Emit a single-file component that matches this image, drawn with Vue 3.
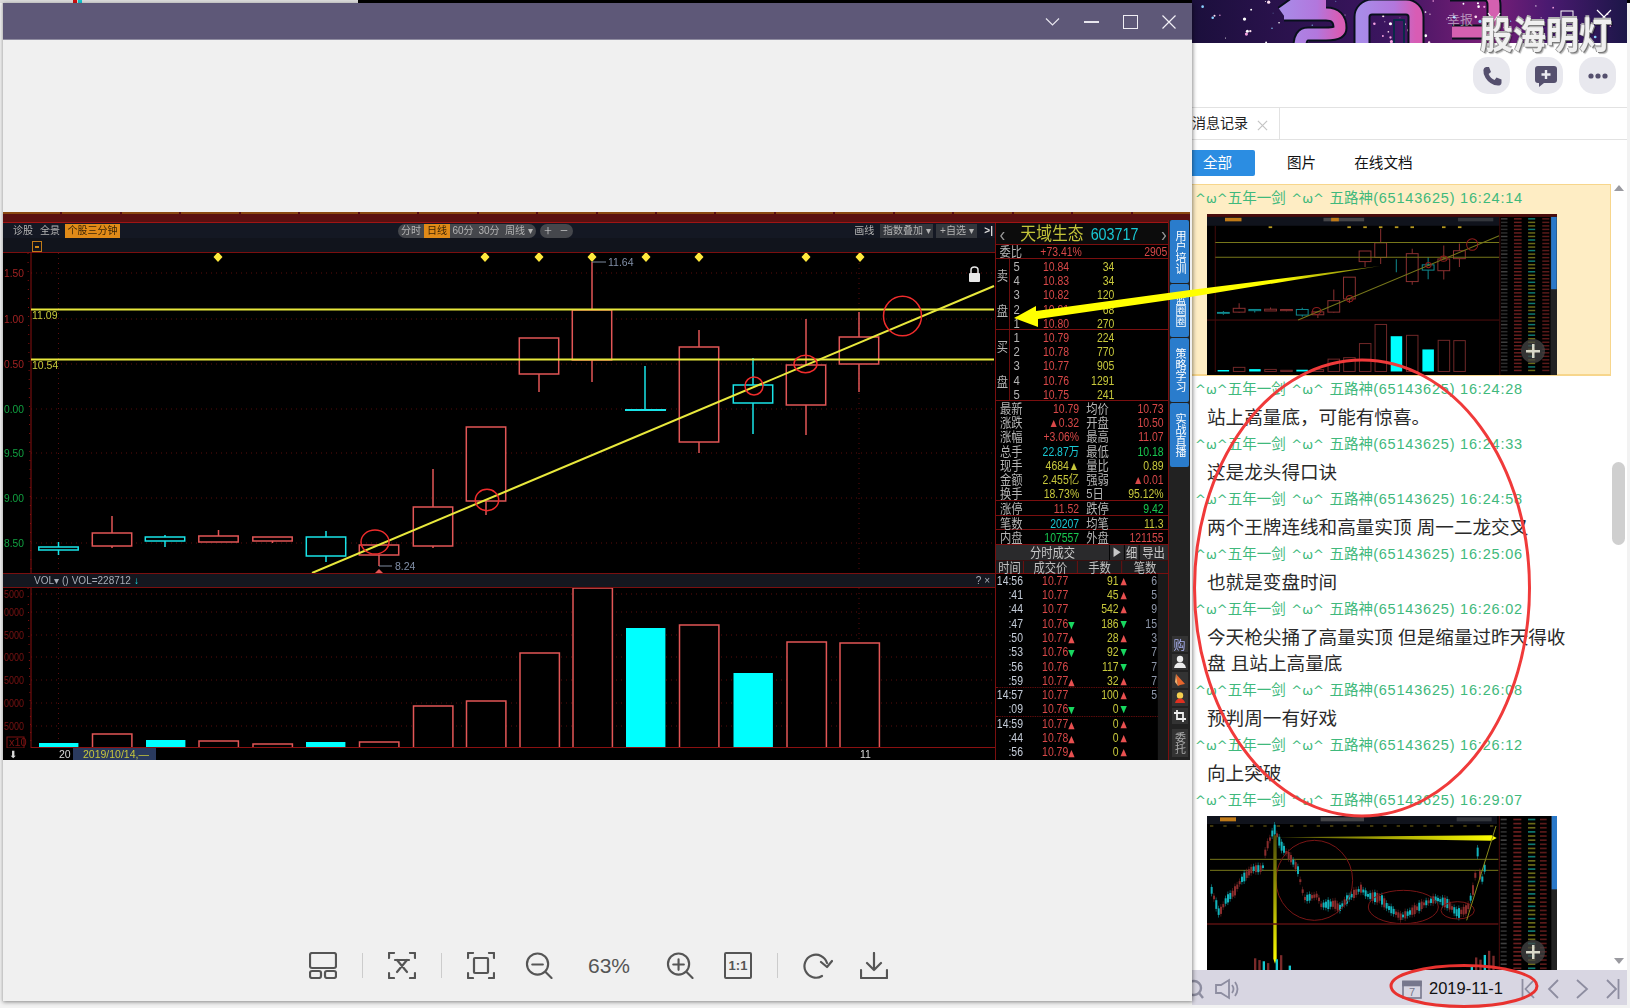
<template>
  <div class="desktop">
    <div class="top-strip">
      <span class="strip-text"><i class="bit red"></i><i class="bit cyan"></i></span>
    </div>

    <!-- chat window behind the viewer -->
    <section class="chat">
      <div class="banner">
        <svg class="banner-art" viewBox="1192 0 435 43" preserveAspectRatio="none">
          <defs>
            <linearGradient id="sky" x1="0" x2="1" y1="0" y2="0">
              <stop offset="0" stop-color="#1b0f3c" />
              <stop offset="0.45" stop-color="#3c1560" />
              <stop offset="0.68" stop-color="#7a1e78" />
              <stop offset="0.82" stop-color="#4a1a70" />
              <stop offset="1" stop-color="#1c1648" />
            </linearGradient>
            <linearGradient id="band" x1="0" x2="1" y1="0" y2="0">
              <stop offset="0" stop-color="#a98be8" />
              <stop offset="0.6" stop-color="#b277dd" />
              <stop offset="1" stop-color="#d85cb4" />
            </linearGradient>
          </defs>
          <rect x="1192" y="0" width="435" height="43" fill="url(#sky)" />
          <circle v-for="s in stars" :key="s.id" :cx="s.x" :cy="s.y" :r="s.r" :fill="s.c" />
          <g fill="none" stroke-linejoin="round">
            <path d="M1282 13 L1296 3 H1326 M1284 14 H1326 Q1340 14 1340 28 Q1340 34 1326 34 H1308 Q1300 34 1300 46" stroke="#08101c" stroke-width="15" />
            <path d="M1282 13 L1296 3 H1326 M1284 14 H1326 Q1340 14 1340 28 Q1340 34 1326 34 H1308 Q1300 34 1300 46" stroke="url(#band)" stroke-width="11" />
            <rect x="1362" y="7" width="54" height="50" rx="10" stroke="#08101c" stroke-width="17" />
            <rect x="1362" y="7" width="54" height="50" rx="10" stroke="url(#band)" stroke-width="13" />
            <rect x="1394" y="20" width="10" height="30" stroke="#0a2a48" stroke-width="2" />
            <path d="M1450 -6 H1484 Q1494 -6 1494 6 V22 Q1494 32 1484 32 H1452" stroke="#08101c" stroke-width="15" />
            <path d="M1450 -6 H1484 Q1494 -6 1494 6 V22 Q1494 32 1484 32 H1452" stroke="#d460b0" stroke-width="11" />
          </g>
          <path d="M1488 13 L1494 21 L1500 13" fill="none" stroke="#fff" stroke-width="1.2" />
          <rect x="1561" y="11" width="12" height="12" fill="none" stroke="#fff" stroke-width="1" />
          <path d="M1597 10 L1611 24 M1611 10 L1597 24" stroke="#fff" stroke-width="1.2" />
        </svg>
        <span class="banner-note">幸报</span>
      </div>
      <div class="watermark">股海明灯</div>

      <div class="actions">
        <button class="act">
          <svg viewBox="0 0 24 24" width="24" height="24"><path d="M6 3 L9 3 L11 8 L8.6 10 Q10.5 14.4 14.6 16 L16.5 13.6 L21.5 15.6 L21.5 19 Q21 21.6 18 21.6 Q10 21 5.6 14 Q3 9.5 3.4 6 Q3.8 3.4 6 3Z" fill="#55506e" /></svg>
        </button>
        <button class="act">
          <svg viewBox="0 0 24 24" width="24" height="24"><path d="M2 5 Q2 2 5 2 H21 Q24 2 24 5 V16 Q24 19 21 19 H11 L6 23 V19 H5 Q2 19 2 16Z" fill="#55506e" /><path d="M13 6 V15 M8.5 10.5 H17.5" stroke="#ecebf1" stroke-width="2.4" /></svg>
        </button>
        <button class="act">
          <svg viewBox="0 0 24 24" width="24" height="24"><circle cx="5" cy="12" r="2.6" fill="#55506e" /><circle cx="12" cy="12" r="2.6" fill="#55506e" /><circle cx="19" cy="12" r="2.6" fill="#55506e" /></svg>
        </button>
      </div>

      <div class="tabs">
        <div class="tab">
          <span class="tab-name">消息记录</span>
          <svg class="tab-x" viewBox="0 0 12 12" width="11" height="11"><path d="M1 1 L11 11 M11 1 L1 11" stroke="#c4c4c4" stroke-width="1.3" /></svg>
        </div>
      </div>

      <div class="filters">
        <span class="filter on">全部</span>
        <span class="filter pic">图片</span>
        <span class="filter doc">在线文档</span>
      </div>

      <div class="log">
        <div class="entry picked">
          <div class="who"><span class="nick"><span class="emo">^ω^</span>五年一剑 <span class="emo">^ω^</span> 五路神</span><span class="uid">(65143625) 16:24:14</span></div>
          <svg class="shot" viewBox="3 212 1187 548" preserveAspectRatio="none">
            <rect x="3" y="212" width="1187" height="548" fill="#000" />
            <rect x="3" y="212" width="1187" height="10" fill="#4a0c0c" />
            <rect x="3" y="222" width="992" height="30" fill="#10131c" />
            <rect x="64" y="225" width="56" height="12" fill="#c07a18" />
            <rect x="398" y="225" width="138" height="12" fill="#454548" />
            <rect x="424" y="225" width="26" height="12" fill="#c07a18" />
            <rect x="854" y="225" width="120" height="12" fill="#33363c" />
            <line x1="3" x2="995" y1="573" y2="573" stroke="#5a1010" stroke-width="3" />
            <line x1="31" x2="31" y1="253" y2="750" stroke="#4a0c0c" stroke-width="3" />
            <rect v-for="d in diamonds" :key="d" :x="d - 6" y="254" width="12" height="6" fill="#b89a20" />
            <g v-for="c in candles" :key="c.x" fill="none" :stroke="c.up ? '#8a3030' : '#0f8a90'" stroke-width="3.4">
              <line :x1="c.x" :x2="c.x" :y1="c.hi" :y2="c.lo" />
              <rect :x="c.x - 20" :y="c.top" width="40" :height="c.bot - c.top" fill="#000" />
            </g>
            <line x1="31" x2="994" y1="309" y2="309" stroke="#77771a" stroke-width="3.4" />
            <line x1="31" x2="994" y1="359" y2="359" stroke="#77771a" stroke-width="3.4" />
            <line x1="312" x2="994" y1="573" y2="286" stroke="#77771a" stroke-width="3.4" />
            <ellipse v-for="e in rings" :key="e.cx" :cx="e.cx" :cy="e.cy" :rx="e.rx" :ry="e.ry" fill="none" stroke="#8e1c1c" stroke-width="3.4" />
            <g v-for="b in volumes" :key="b.x">
              <rect :x="b.x" :y="b.top" width="39" :height="748 - b.top" :fill="b.up ? 'none' : '#00ffff'" :stroke="b.up ? '#702828' : 'none'" stroke-width="3.4" />
            </g>
            <g v-for="n in noise" :key="n.id">
              <rect x="1000" :y="n.y" width="22" height="5" :fill="n.a" />
              <rect x="1044" :y="n.y" width="26" height="5" fill="#6a1e1e" />
              <rect x="1092" :y="n.y" width="24" height="5" :fill="n.b" />
              <rect x="1140" :y="n.y" width="24" height="5" fill="#5a1a1a" />
            </g>
            <line x1="996" x2="996" y1="223" y2="760" stroke="#4a0c0c" stroke-width="3" />
            <rect x="1168" y="222" width="22" height="538" fill="#222" />
            <rect x="1170" y="222" width="19" height="246" fill="#2a78c8" />
          </svg>
          <span class="plus"></span>
        </div>

        <div v-for="m in messages" :key="m.time" class="entry">
          <div class="who"><span class="nick"><span class="emo">^ω^</span>五年一剑 <span class="emo">^ω^</span> 五路神</span><span class="uid">(65143625) {{ m.time }}</span></div>
          <p class="say">{{ m.text }}</p>
        </div>

        <div class="entry">
          <div class="who"><span class="nick"><span class="emo">^ω^</span>五年一剑 <span class="emo">^ω^</span> 五路神</span><span class="uid">(65143625) 16:29:07</span></div>
          <svg class="shot" viewBox="51 42 1050 483" preserveAspectRatio="none">
            <defs>
              <linearGradient id="hot" x1="0" x2="1" y1="0" y2="0">
                <stop offset="0" stop-color="#4a4a08" />
                <stop offset="1" stop-color="#ffff00" />
              </linearGradient>
              <linearGradient id="drop" x1="0" x2="0" y1="0" y2="1">
                <stop offset="0" stop-color="#4a4a08" />
                <stop offset="1" stop-color="#ffff00" />
              </linearGradient>
            </defs>
            <rect x="51" y="42" width="1050" height="483" fill="#000" />
            <rect x="51" y="42" width="870" height="24" fill="#10131c" />
            <rect x="90" y="46" width="48" height="12" fill="#c07a18" />
            <rect x="392" y="46" width="130" height="12" fill="#454548" />
            <rect x="800" y="46" width="105" height="12" fill="#33363c" />
            <line x1="60" x2="925" y1="72" y2="72" stroke="#7a6a18" stroke-width="3" stroke-dasharray="10 30" />
            <line x1="60" x2="925" y1="172" y2="172" stroke="#77771a" stroke-width="3" />
            <line x1="60" x2="925" y1="205" y2="205" stroke="#77771a" stroke-width="3" />
            <g v-for="b in sticks" :key="b.x">
              <line :x1="b.x + 2.5" :x2="b.x + 2.5" :y1="b.y - 8" :y2="b.y + b.h + 8" :stroke="b.c" stroke-width="1.5" />
              <rect :x="b.x" :y="b.y" width="6" :height="b.h" :fill="b.c" />
            </g>
            <ellipse cx="373" cy="235" rx="115" ry="120" fill="none" stroke="#7a1616" stroke-width="3" />
            <ellipse cx="640" cy="315" rx="105" ry="50" fill="none" stroke="#7a1616" stroke-width="3" />
            <ellipse cx="803" cy="325" rx="50" ry="26" fill="none" stroke="#7a1616" stroke-width="3" />
            <polygon points="255,106 905,100 920,108 905,116" fill="url(#hot)" />
            <polygon points="250,100 260,100 260,470 255,485 250,470" fill="url(#drop)" />
            <line x1="830" y1="355" x2="918" y2="72" stroke="#8a8a1a" stroke-width="3" />
            <line x1="51" x2="925" y1="366" y2="366" stroke="#5a1010" stroke-width="5" />
            <rect v-for="s in spikes" :key="s.x" :x="s.x" :y="s.y" width="7" :height="525 - s.y" :fill="s.c" />
            <g v-for="n in noiseTwo" :key="n.id">
              <rect x="932" :y="n.y" width="18" height="5" :fill="n.a" />
              <rect x="970" :y="n.y" width="24" height="5" fill="#6a1e1e" />
              <rect x="1014" :y="n.y" width="22" height="5" :fill="n.b" />
              <rect x="1050" :y="n.y" width="20" height="5" fill="#5a1a1a" />
            </g>
            <line x1="928" x2="928" y1="42" y2="525" stroke="#4a0c0c" stroke-width="3" />
            <rect x="1084" y="42" width="17" height="483" fill="#222" />
            <rect x="1085" y="42" width="16" height="220" fill="#2a78c8" />
          </svg>
          <span class="plus low"></span>
        </div>
      </div>

      <div class="scroll">
        <i class="arrow up"></i>
        <i class="thumb"></i>
        <i class="arrow down"></i>
      </div>

      <div class="footer">
        <svg class="foot-find" viewBox="0 0 16 22" width="16" height="22"><circle cx="2" cy="10" r="7" fill="none" stroke="#8d8da0" stroke-width="2.4" /><path d="M7 15 L11 20" stroke="#8d8da0" stroke-width="2.4" /></svg>
        <svg class="foot-sound" viewBox="0 0 26 22" width="26" height="22" fill="none" stroke="#8d8da0" stroke-width="1.8">
          <path d="M1 7 H6 L14 2 V20 L6 15 H1Z" />
          <path d="M17 7 Q20 11 17 15 M20 4 Q25 11 20 18" />
        </svg>
        <svg class="foot-cal" viewBox="0 0 20 20" width="20" height="20" fill="none" stroke="#77778c" stroke-width="1.6">
          <rect x="1" y="2.5" width="18" height="16.5" />
          <rect x="1" y="2.5" width="18" height="4" fill="#77778c" />
        </svg>
        <span class="foot-cal-num">7</span>
        <span class="date">2019-11-1</span>
        <svg class="pager first" viewBox="0 0 15 20" width="15" height="20"><path d="M1.5 0 V20 M13 1 L4.5 10 L13 19" /></svg>
        <svg class="pager back" viewBox="0 0 12 20" width="12" height="20"><path d="M11 1 L2 10 L11 19" /></svg>
        <svg class="pager" viewBox="0 0 14 20" width="14" height="20"><path d="M2 1 L12 10 L2 19" /></svg>
        <svg class="pager" viewBox="0 0 15 20" width="15" height="20"><path d="M2 1 L11 10 L2 19 M13.5 0 V20" /></svg>
      </div>
    </section>

    <!-- image viewer on top -->
    <section class="viewer">
      <header class="title-bar">
        <svg viewBox="0 0 14 8" width="15" height="8"><path d="M.5 .5 L7 7 L13.5 .5" fill="none" stroke="#e8e6ee" stroke-width="1.2" /></svg>
        <i class="min"></i>
        <i class="max"></i>
        <svg viewBox="0 0 14 14" width="14" height="14"><path d="M.5 .5 L13.5 13.5 M13.5 .5 L.5 13.5" stroke="#f2f0f6" stroke-width="1.2" /></svg>
      </header>

      <div class="stage">
        <div class="chart">
          <div class="chart-top">
            <i v-for="n in 20" :key="n" class="top-chip"></i>
          </div>
          <div class="chart-row">
            <div class="kline">
              <div class="tools">
                <span class="tool">诊股</span>
                <span class="tool">全景</span>
                <span class="tool hot">个股三分钟</span>
                <div class="pill">
                  <span>分时</span><span class="lit">日线</span><span>60分</span><span>30分</span><span class="wide">周线 ▾</span>
                </div>
                <div class="pill mini"><span>＋</span><span>－</span></div>
                <span class="tool push">画线</span>
                <span class="tool box index">指数叠加 ▾</span>
                <span class="tool box self">+自选 ▾</span>
                <span class="tool end">&gt;|</span>
              </div>
              <div class="subbar"><i class="drop"></i></div>

              <svg class="plot" viewBox="3 253 992 320" width="992" height="320">
                <g stroke="#5a0d0d" stroke-dasharray="1 4">
                  <line v-for="g in priceGrid" :key="g.y" x1="31" x2="995" :y1="g.y" :y2="g.y" />
                  <line x1="58.5" x2="58.5" y1="253" y2="573" />
                  <line x1="859" x2="859" y1="253" y2="573" />
                </g>
                <line x1="31" x2="31" y1="253" y2="573" stroke="#8a1010" />
                <line x1="28" x2="31" y1="253" y2="573" stroke="#8a1010" stroke-dasharray="1 8" />
                <text v-for="g in priceGrid" :key="g.label" class="axis" x="4" :y="g.y + 4" textLength="20" lengthAdjust="spacingAndGlyphs" :fill="g.c">{{ g.label }}</text>
                <polygon v-for="d in diamonds" :key="d" :points="`${d},252 ${d + 4.5},257 ${d},262 ${d - 4.5},257`" fill="#ffe93c" />

                <g v-for="c in candles" :key="c.x" fill="none" :stroke="c.up ? '#e25656' : '#19e4e8'" stroke-width="1.5">
                  <line :x1="c.x" :x2="c.x" :y1="c.hi" :y2="c.lo" />
                  <rect :x="c.x - 19.7" :y="c.top" width="39.4" :height="c.bot - c.top" fill="#000" />
                </g>
                <line x1="625" x2="666" y1="410" y2="410" stroke="#19e4e8" stroke-width="2" />

                <polyline points="379,566 392,566" fill="none" stroke="#7f8ca0" />
                <text class="note" x="395" y="570">8.24</text>
                <polygon points="379,569 383,573 375,573" fill="#e25656" />
                <polyline points="592,262 606,262" fill="none" stroke="#7f8ca0" />
                <text class="note" x="608" y="266">11.64</text>

                <line x1="31" x2="994" y1="309.5" y2="309.5" stroke="#e8e83c" stroke-width="2" />
                <line x1="31" x2="994" y1="359.5" y2="359.5" stroke="#e8e83c" stroke-width="2" />
                <text class="level" x="32" y="319">11.09</text>
                <text class="level" x="32" y="369">10.54</text>
                <line x1="312" y1="573" x2="994" y2="286" stroke="#e8e83c" stroke-width="2" />
                <ellipse v-for="e in rings" :key="e.cx" :cx="e.cx" :cy="e.cy" :rx="e.rx" :ry="e.ry" fill="none" stroke="#f02c2c" stroke-width="1.5" />

                <g fill="#e8e8e8">
                  <rect x="969" y="273" width="11" height="9" rx="1" />
                  <path d="M971 273 V270 Q971 267 974.5 267 Q978 267 978 270 V273" fill="none" stroke="#e8e8e8" stroke-width="1.5" />
                </g>
              </svg>

              <div class="vol-bar">
                <span class="vol-name">VOL▾</span>
                <span>()</span>
                <span>VOL=228712</span>
                <span class="vol-down">↓</span>
                <span class="vol-close">? ×</span>
              </div>

              <svg class="plot" viewBox="3 588 992 160" width="992" height="160">
                <g stroke="#5a0d0d" stroke-dasharray="1 4">
                  <line v-for="v in volGrid" :key="v.y" x1="31" x2="995" :y1="v.y" :y2="v.y" />
                  <line x1="58.5" x2="58.5" y1="588" y2="748" />
                  <line x1="859" x2="859" y1="588" y2="748" />
                </g>
                <line x1="31" x2="31" y1="588" y2="748" stroke="#8a1010" />
                <line x1="28" x2="31" y1="588" y2="748" stroke="#8a1010" stroke-dasharray="1 7" />
                <text v-for="v in volGrid" :key="v.y" class="axis dark" x="4" :y="v.y + 4" textLength="20" lengthAdjust="spacingAndGlyphs">{{ v.label }}</text>
                <rect x="7" y="737" width="17" height="11" fill="none" stroke="#7a1010" />
                <text class="axis dark" x="9" y="746">x10</text>
                <rect v-for="b in volumes" :key="b.x" :x="b.x" :y="b.top" width="39.4" :height="748 - b.top" :fill="b.up ? '#000' : '#00ffff'" :stroke="b.up ? '#e25656' : 'none'" stroke-width="1.5" />
                <line x1="31" x2="995" y1="747.5" y2="747.5" stroke="#8a1010" />
              </svg>

              <div class="date-row">
                <span class="date-arrow">⬇</span>
                <span class="date-year">20</span>
                <span class="date-chip">2019/10/14,—</span>
                <span class="date-month">11</span>
              </div>
            </div>

            <aside class="quote">
              <div class="quote-in">
                <div class="q-title">
                  <span class="nav">‹</span>
                  <span class="q-name">天域生态</span>
                  <span class="q-code">603717</span>
                  <span class="nav next">›</span>
                </div>
                <div class="q-wei">
                  <span class="lab">委比</span><span class="red">+73.41%</span><span class="red right">2905</span>
                </div>
                <div v-for="side in book" :key="side.name" class="book">
                  <div class="book-side"><span>{{ side.name }}</span><span>盘</span></div>
                  <div class="book-rows">
                    <div v-for="r in side.rows" :key="r.n" class="book-row">
                      <span class="lab">{{ r.n }}</span><span class="red">{{ r.p }}</span><span class="yel right">{{ r.v }}</span>
                    </div>
                  </div>
                </div>
                <div class="stats">
                  <div v-for="s in stats" :key="s.a" class="stat">
                    <span class="lab">{{ s.a }}</span>
                    <span class="right" :class="s.ac">{{ s.av }}</span>
                    <span class="lab second">{{ s.b }}</span>
                    <span class="right" :class="s.bc">{{ s.bv }}</span>
                  </div>
                </div>
                <div v-for="s in statsLow" :key="s.a" class="stat ruled">
                  <span class="lab">{{ s.a }}</span>
                  <span class="right" :class="s.ac">{{ s.av }}</span>
                  <span class="lab second">{{ s.b }}</span>
                  <span class="right" :class="s.bc">{{ s.bv }}</span>
                </div>
                <div class="deal-head">
                  <span class="deal-name">分时成交</span>
                  <span class="deal-btn play">▶</span>
                  <span class="deal-btn">细</span>
                  <span class="deal-btn out">导出</span>
                </div>
                <div class="deal-cols">
                  <span class="c1">时间</span><span class="c2">成交价</span><span class="c3">手数</span><span class="c4">笔数</span>
                </div>
                <div class="ticks">
                  <div class="tick-list">
                    <div v-for="(t, i) in ticks" :key="i" class="tick" :class="{ cut: t.cut }">
                      <span class="t-time">{{ t.t }}</span>
                      <span class="t-price">{{ t.p }}<i v-if="t.pa" :class="t.pa">{{ t.pa === 'u' ? '▲' : '▼' }}</i></span>
                      <span class="t-vol">{{ t.v }}</span>
                      <i class="t-mark" :class="t.va">{{ t.va === 'u' ? '▲' : '▼' }}</i>
                      <span class="t-count">{{ t.c }}</span>
                    </div>
                  </div>
                  <i class="tick-scroll"></i>
                </div>
              </div>
            </aside>

            <div class="rail">
              <span v-for="b in rail" :key="b" class="rail-tab">{{ b }}</span>
              <div class="rail-tools">
                <span class="rail-btn buy">购</span>
                <span class="rail-btn">
                  <svg viewBox="0 0 14 14" width="14" height="14"><circle cx="7" cy="4" r="3.2" fill="#eee" /><path d="M1 13 Q2 7.5 7 7.5 Q12 7.5 13 13Z" fill="#eee" /></svg>
                </span>
                <span class="rail-btn">
                  <svg viewBox="0 0 14 14" width="14" height="14"><path d="M3 1 L12 11 L7 12 L5 13 Z" fill="#e8662c" /><path d="M3 1 L5 13 L2 9Z" fill="#f0b070" /></svg>
                </span>
                <span class="rail-btn">
                  <svg viewBox="0 0 14 14" width="14" height="14"><circle cx="7" cy="4.5" r="3.2" fill="#f4d050" /><path d="M2 12 Q3 7.5 7 7.5 Q11 7.5 12 12Z" fill="#e03020" /></svg>
                </span>
                <span class="rail-btn">
                  <svg viewBox="0 0 14 14" width="14" height="14" fill="none" stroke="#eee" stroke-width="1.8"><path d="M4 1 V10 H13 M1 4 H10 V13" /></svg>
                </span>
                <span class="rail-btn tall">委托</span>
              </div>
            </div>
          </div>
        </div>
      </div>

      <footer class="bar">
        <svg class="ic" viewBox="0 0 28 27"><rect x="1" y="1" width="26" height="15" rx="2" /><rect x="1" y="19" width="11" height="7" rx="2" /><rect x="16" y="19" width="11" height="7" rx="2" /></svg>
        <i class="sep"></i>
        <svg class="ic" viewBox="0 0 28 27"><path d="M1 6 V1 H6 M22 1 H27 V6 M27 21 V26 H22 M6 26 H1 V21" /><path d="M7 8 H21 M9 8 L19 20 M19 8 L9 20" /></svg>
        <i class="sep"></i>
        <svg class="ic" viewBox="0 0 28 27"><path d="M1 6 V1 H6 M22 1 H27 V6 M27 21 V26 H22 M6 26 H1 V21" /><rect x="7" y="6" width="14" height="15" rx="1" /></svg>
        <svg class="ic gap-s" viewBox="0 0 28 28"><circle cx="12.5" cy="12.5" r="11" /><path d="M7 13 H18 M20.5 20.5 L27 27" /></svg>
        <span class="pct">63%</span>
        <svg class="ic gap-m" viewBox="0 0 28 28"><circle cx="12.5" cy="12.5" r="11" /><path d="M7 13 H18 M12.5 7.5 V18.5 M20.5 20.5 L27 27" /></svg>
        <span class="one gap-s">1:1</span>
        <i class="sep"></i>
        <svg class="ic rot" viewBox="0 0 30 27"><path d="M19 24 A 11.5 11.5 0 1 1 24 11" /><path d="M29 9 L24 15 L18 10" /></svg>
        <svg class="ic gap-x" viewBox="0 0 28 27"><path d="M14 1 V18 M7 11 L14 18 L21 11 M1 18 V26 H27 V18" /></svg>
      </footer>
    </section>

    <!-- hand drawn marks over both windows -->
    <svg class="marks" viewBox="0 0 1630 1008" width="1630" height="1008">
      <defs>
        <linearGradient id="fade" gradientUnits="userSpaceOnUse" x1="1014" y1="318" x2="1380" y2="266">
          <stop offset="0.72" stop-color="#ffff00" />
          <stop offset="1" stop-color="#6e6e10" />
        </linearGradient>
      </defs>
      <polygon points="1014,318 1036,306 1036,311 1190,290 1380,266 1190,297 1038,319 1038,327" fill="url(#fade)" />
      <ellipse cx="1362" cy="588" rx="167.5" ry="228" fill="none" stroke="#f03a3a" stroke-width="3" />
      <ellipse cx="1464" cy="986" rx="73" ry="20.5" fill="none" stroke="#e8322f" stroke-width="3" />
    </svg>
  </div>
</template>

<script setup>
const diamonds = [218, 485, 539, 592, 646, 699, 806, 860]

const candles = [
  { x: 58.5, top: 547, bot: 550, hi: 542, lo: 555, up: false },
  { x: 112, top: 533, bot: 546, hi: 516, lo: 548, up: true },
  { x: 165, top: 537, bot: 541, hi: 535, lo: 547, up: false },
  { x: 218.5, top: 536, bot: 542, hi: 530, lo: 542, up: true },
  { x: 272.5, top: 537, bot: 541, hi: 537, lo: 543, up: true },
  { x: 326, top: 537, bot: 556, hi: 531, lo: 562, up: false },
  { x: 379, top: 545, bot: 555, hi: 545, lo: 566, up: true },
  { x: 433, top: 507, bot: 546, hi: 469, lo: 548, up: true },
  { x: 486, top: 427, bot: 501, hi: 427, lo: 515, up: true },
  { x: 539, top: 338, bot: 374, hi: 338, lo: 392, up: true },
  { x: 592, top: 310, bot: 360, hi: 262, lo: 382, up: true },
  { x: 645, top: 410, bot: 410, hi: 366, lo: 410, up: false },
  { x: 699, top: 347, bot: 442, hi: 330, lo: 453, up: true },
  { x: 753, top: 385, bot: 403, hi: 358, lo: 434, up: false },
  { x: 806, top: 365, bot: 405, hi: 319, lo: 435, up: true },
  { x: 859, top: 337, bot: 364, hi: 312, lo: 392, up: true }
]

const rings = [
  { cx: 375, cy: 542, rx: 14, ry: 12 },
  { cx: 487, cy: 500, rx: 11.7, ry: 10.7 },
  { cx: 754, cy: 386, rx: 9, ry: 9 },
  { cx: 805.5, cy: 364, rx: 11.5, ry: 8.7 },
  { cx: 902.5, cy: 316, rx: 19, ry: 19.7 }
]

const volumes = [
  { x: 39, top: 743, up: false },
  { x: 92.5, top: 734, up: true },
  { x: 146, top: 740, up: false },
  { x: 199, top: 741, up: true },
  { x: 253, top: 744, up: true },
  { x: 306, top: 742, up: false },
  { x: 359.5, top: 742, up: true },
  { x: 413.5, top: 706, up: true },
  { x: 466.5, top: 701, up: true },
  { x: 520, top: 653, up: true },
  { x: 573, top: 588, up: true },
  { x: 626, top: 628, up: false },
  { x: 679.5, top: 625, up: true },
  { x: 733.5, top: 673, up: false },
  { x: 787, top: 642, up: true },
  { x: 840, top: 643, up: true }
]

const priceGrid = [
  { y: 273, label: '1.50', c: '#a02222' },
  { y: 319, label: '1.00', c: '#a02222' },
  { y: 364, label: '0.50', c: '#a02222' },
  { y: 409, label: '0.00', c: '#10a040' },
  { y: 453, label: '9.50', c: '#10a040' },
  { y: 498, label: '9.00', c: '#10a040' },
  { y: 543, label: '8.50', c: '#10a040' }
]

const volGrid = [
  { y: 594, label: '5000' },
  { y: 612, label: '0000' },
  { y: 635, label: '5000' },
  { y: 657, label: '0000' },
  { y: 680, label: '5000' },
  { y: 703, label: '0000' },
  { y: 726, label: '5000' }
]

const book = [
  {
    name: '卖',
    rows: [
      { n: 5, p: '10.84', v: 34 },
      { n: 4, p: '10.83', v: 34 },
      { n: 3, p: '10.82', v: 120 },
      { n: 2, p: '10.81', v: 68 },
      { n: 1, p: '10.80', v: 270 }
    ]
  },
  {
    name: '买',
    rows: [
      { n: 1, p: '10.79', v: 224 },
      { n: 2, p: '10.78', v: 770 },
      { n: 3, p: '10.77', v: 905 },
      { n: 4, p: '10.76', v: 1291 },
      { n: 5, p: '10.75', v: 241 }
    ]
  }
]

const stats = [
  { a: '最新', av: '10.79', ac: 'red', b: '均价', bv: '10.73', bc: 'red' },
  { a: '涨跌', av: '▲0.32', ac: 'red', b: '开盘', bv: '10.50', bc: 'red' },
  { a: '涨幅', av: '+3.06%', ac: 'red', b: '最高', bv: '11.07', bc: 'red' },
  { a: '总手', av: '22.87万', ac: 'cyan', b: '最低', bv: '10.18', bc: 'green' },
  { a: '现手', av: '4684▲', ac: 'yel', b: '量比', bv: '0.89', bc: 'yel' },
  { a: '金额', av: '2.455亿', ac: 'yel', b: '强弱', bv: '▲0.01', bc: 'red' },
  { a: '换手', av: '18.73%', ac: 'yel', b: '5日', bv: '95.12%', bc: 'yel' }
]

const statsLow = [
  { a: '涨停', av: '11.52', ac: 'red', b: '跌停', bv: '9.42', bc: 'green' },
  { a: '笔数', av: '20207', ac: 'cyan', b: '均笔', bv: '11.3', bc: 'yel' },
  { a: '内盘', av: '107557', ac: 'green', b: '外盘', bv: '121155', bc: 'red' }
]

const ticks = [
  { t: '14:56', p: '10.77', v: 91, va: 'u', c: 6 },
  { t: ':41', p: '10.77', v: 45, va: 'u', c: 5 },
  { t: ':44', p: '10.77', v: 542, va: 'u', c: 9 },
  { t: ':47', p: '10.76', pa: 'd', v: 186, va: 'd', c: 15 },
  { t: ':50', p: '10.77', pa: 'u', v: 28, va: 'u', c: 3 },
  { t: ':53', p: '10.76', pa: 'd', v: 92, va: 'd', c: 7 },
  { t: ':56', p: '10.76', v: 117, va: 'd', c: 7 },
  { t: ':59', p: '10.77', pa: 'u', v: 32, va: 'u', c: 7, cut: true },
  { t: '14:57', p: '10.77', v: 100, va: 'u', c: 5 },
  { t: ':09', p: '10.76', pa: 'd', v: 0, va: 'd', c: '', cut: true },
  { t: '14:59', p: '10.77', pa: 'u', v: 0, va: 'u', c: '' },
  { t: ':44', p: '10.78', pa: 'u', v: 0, va: 'u', c: '' },
  { t: ':56', p: '10.79', pa: 'u', v: 0, va: 'u', c: '' }
]

const rail = ['用户培训', '蓝圈圈', '策略学习', '实战直播']

const messages = [
  { time: '16:24:28', text: '站上高量底，可能有惊喜。' },
  { time: '16:24:33', text: '这是龙头得口诀' },
  { time: '16:24:58', text: '两个王牌连线和高量实顶 周一二龙交叉' },
  { time: '16:25:06', text: '也就是变盘时间' },
  { time: '16:26:02', text: '今天枪尖捅了高量实顶 但是缩量过昨天得收盘 且站上高量底' },
  { time: '16:26:08', text: '预判周一有好戏' },
  { time: '16:26:12', text: '向上突破' }
]

// small pseudo random so the banner and thumbnails stay the same every run
let seed = 7
const rnd = () => {
  seed = (seed * 9301 + 49297) % 233280
  return seed / 233280
}

const starColors = ['#ffffff', '#f4a0e0', '#8ad0ff', '#ffe0f0']
const stars = Array.from({ length: 70 }, (_, id) => ({
  id,
  x: 1192 + rnd() * 435,
  y: rnd() * 43,
  r: 0.4 + rnd() * 1.3,
  c: starColors[Math.floor(rnd() * 4)]
}))

const noise = Array.from({ length: 44 }, (_, id) => ({
  id,
  y: 226 + id * 12,
  a: id % 5 === 0 ? '#404040' : '#2e2e2e',
  b: id % 3 === 0 ? '#0f7a70' : '#6a6a18'
}))

const noiseTwo = Array.from({ length: 38 }, (_, id) => ({
  id,
  y: 50 + id * 12.4,
  a: id % 5 === 0 ? '#404040' : '#2e2e2e',
  b: id % 3 === 0 ? '#0f7a70' : '#6a6a18'
}))

// price path of the second thumbnail, cut into little candles
const path = [[62, 265], [85, 335], [105, 295], [130, 270], [150, 235], [185, 200], [215, 200], [225, 140], [250, 80], [270, 130], [300, 170], [320, 200], [340, 290], [380, 280], [390, 310], [430, 305], [445, 320], [470, 290], [510, 260], [530, 280], [570, 290], [590, 315], [630, 345], [660, 330], [700, 305], [735, 290], [770, 305], [800, 335], [830, 320], [850, 250], [860, 150], [870, 250], [885, 180]]

const sticks = []
for (let x = 62; x < 885; x += 7) {
  const i = path.findIndex((p, n) => path[n + 1] && x < path[n + 1][0])
  const a = path[i]
  const b = path[i + 1]
  const y = a[1] + ((x - a[0]) / (b[0] - a[0])) * (b[1] - a[1])
  const h = 8 + rnd() * 22
  sticks.push({ x, y: y - h / 2, h, c: rnd() > 0.45 ? '#12b4bc' : '#8a2c2c' })
}

const spikes = Array.from({ length: 60 }, (_, i) => {
  const x = 140 + i * 13
  const near = Math.abs(x - 240) < 60
  const late = x > 840
  const base = near ? 60 : late ? 80 : 14
  return {
    x,
    y: 525 - (6 + rnd() * base),
    c: i % 3 === 0 ? '#16c8d0' : '#7a2a2a'
  }
})
</script>

<style>
html,
body {
  margin: 0;
  background: #f2f2f2;
}
</style>

<style scoped>
.desktop {
  position: relative;
  width: 1630px;
  height: 1008px;
  overflow: hidden;
  background: #f2f2f2;
  font-family: "Liberation Sans", "Noto Sans CJK SC", sans-serif;
}

.top-strip {
  display: flex;
  height: 3px;
  background: #000;
}

.strip-text {
  display: flex;
  width: 358px;
  padding-left: 73px;
  gap: 1px;
  box-sizing: border-box;
  background: #dcdcdc;
}

.bit {
  width: 4px;
  height: 3px;
}

.bit.red {
  background: #d01010;
}

.bit.cyan {
  background: #10c8d0;
}

/* chat window */
.chat {
  position: absolute;
  left: 1192px;
  top: 0;
  width: 435px;
  height: 1005px;
  display: flex;
  flex-direction: column;
  background: #fff;
  overflow: hidden;
}

.banner {
  position: relative;
  height: 43px;
  flex: none;
}

.banner-art {
  display: block;
  width: 100%;
  height: 43px;
}

.banner-note {
  position: absolute;
  left: 255px;
  top: 9px;
  font-size: 13px;
  color: rgba(255, 255, 255, 0.5);
}

.watermark {
  position: absolute;
  left: 288px;
  top: 15px;
  font-size: 33px;
  line-height: 38px;
  font-weight: 700;
  white-space: nowrap;
  color: rgba(250, 250, 250, 0.92);
  transform: scaleY(1.12);
  transform-origin: 0 0;
  text-shadow: 1px 1px 0 #7a7a7a, -1px 0 0 #9a9a9a, 0 -1px 0 #b0b0b0, 2px 2px 1px rgba(0, 0, 0, 0.3);
}

.actions {
  display: flex;
  justify-content: flex-end;
  gap: 16px;
  padding: 14px 11px 13px 0;
  flex: none;
}

.act {
  width: 37px;
  height: 37px;
  display: flex;
  align-items: center;
  justify-content: center;
  padding: 0;
  border: none;
  border-radius: 15px;
  background: #e8e8ee;
}

.tabs {
  display: flex;
  height: 33px;
  flex: none;
  border-top: 1px solid #e2e2e2;
  border-bottom: 1px solid #e2e2e2;
  box-sizing: border-box;
}

.tab {
  width: 87px;
  display: flex;
  align-items: center;
  gap: 9px;
  border-right: 1px solid #e2e2e2;
}

.tab-name {
  font-size: 14px;
  color: #222;
  white-space: nowrap;
  padding-bottom: 3px;
}

.tab-x {
  margin-top: 3px;
}

.filters {
  display: flex;
  align-items: flex-start;
  height: 44px;
  flex: none;
  padding-top: 10px;
  box-sizing: border-box;
  font-size: 14.6px;
  color: #111;
}

.filter {
  line-height: 26px;
}

.filter.on {
  width: 63px;
  padding-left: 11px;
  box-sizing: border-box;
  background: #2b8de2;
  color: #fff;
  border-radius: 0 2px 2px 0;
}

.filter.pic {
  margin-left: 32px;
}

.filter.doc {
  margin-left: 38px;
}

.log {
  flex: 1;
  min-height: 0;
  overflow: hidden;
}

.entry {
  position: relative;
  padding: 0 0 3px 3px;
}

.entry.picked {
  width: 419px;
  height: 192px;
  margin-bottom: 3px;
  padding: 3px 0 0 3px;
  box-sizing: border-box;
  background: #feedc4;
  border: 1px solid #f7d68c;
  border-left: none;
  border-bottom-width: 2px;
}

.who {
  height: 20px;
  line-height: 20px;
  font-size: 14.5px;
  color: #3fb97c;
  white-space: nowrap;
}

.nick {
  word-spacing: 1.6px;
}

.uid {
  letter-spacing: 0.8px;
}

.emo {
  font-family: "DejaVu Sans", sans-serif;
  font-size: 13px;
}

.say {
  margin: 6px 0 0;
  padding-left: 12px;
  width: 372px;
  font-size: 18.6px;
  line-height: 26px;
  color: #2a2a2a;
}

.shot {
  display: block;
  width: 350px;
  height: 161px;
  margin: 6px 0 0 12px;
}

.plus {
  position: absolute;
  left: 329px;
  top: 154px;
  width: 24px;
  height: 24px;
  border-radius: 50%;
  background:
    linear-gradient(#d8d8c8, #d8d8c8) center / 14px 2.5px no-repeat,
    linear-gradient(#d8d8c8, #d8d8c8) center / 2.5px 14px no-repeat,
    rgba(70, 70, 70, 0.75);
}

.plus.low {
  top: 150px;
}

.scroll {
  position: absolute;
  left: 420px;
  top: 180px;
  width: 14px;
  height: 790px;
  background: #fff;
}

.thumb {
  position: absolute;
  top: 282px;
  width: 13px;
  height: 83px;
  border-radius: 7px;
  background: #cfcfcf;
}

.arrow {
  position: absolute;
  left: 2px;
  width: 0;
  height: 0;
  border-left: 5px solid transparent;
  border-right: 5px solid transparent;
}

.arrow.up {
  top: 5px;
  border-bottom: 6px solid #9a9aa0;
}

.arrow.down {
  bottom: 6px;
  border-top: 6px solid #9a9aa0;
}

.footer {
  display: flex;
  align-items: center;
  height: 35px;
  padding-top: 2px;
  box-sizing: border-box;
  flex: none;
  background: #d8d6e2;
}

.foot-sound {
  margin-left: 7px;
}

.foot-cal {
  margin-left: 161px;
}

.foot-cal-num {
  width: 0;
  font-size: 11px;
  color: #77778c;
  transform: translate(-13px, 3px);
}

.date {
  margin-left: 7px;
  font-size: 16.5px;
  color: #111;
  white-space: nowrap;
}

.pager {
  margin-left: 16px;
  fill: none;
  stroke: #8d8da0;
  stroke-width: 1.8;
}

.pager.first {
  margin-left: 18px;
}

.pager.back {
  margin-left: 11px;
}

/* viewer window */
.viewer {
  position: absolute;
  left: 2px;
  top: 3px;
  width: 1190px;
  height: 998px;
  display: flex;
  flex-direction: column;
  background: #f0f0f0;
  box-shadow: 1px 1px 4px rgba(0, 0, 0, 0.45);
  border-left: 1px solid #c8c8c8;
  box-sizing: border-box;
}

.title-bar {
  display: flex;
  align-items: center;
  justify-content: flex-end;
  gap: 24px;
  height: 37px;
  padding: 1px 16px 0 0;
  flex: none;
  background: #5e5878;
  border-bottom: 1px solid #8f8ca0;
  box-sizing: border-box;
}

.min {
  width: 15px;
  height: 2px;
  background: #e8e6ee;
}

.max {
  width: 13px;
  height: 12px;
  border: 1px solid #f0eef4;
}

.stage {
  flex: 1;
  min-height: 0;
  padding-top: 172px;
}

.chart {
  width: 1187px;
  height: 548px;
  display: flex;
  flex-direction: column;
  background: #000;
  color: #aaa;
  filter: blur(0.35px);
  overflow: hidden;
  font-size: 11px;
}

.chart-top {
  display: flex;
  gap: 2px;
  height: 11px;
  flex: none;
  background: #5a1010;
  border-bottom: 1px solid #a01414;
  box-sizing: border-box;
}

.top-chip {
  flex: 1;
  height: 2px;
  background: #8a4a12;
}

.chart-row {
  display: flex;
  flex: 1;
  min-height: 0;
}

.kline {
  width: 992px;
  flex: none;
  display: flex;
  flex-direction: column;
  border-right: 1px solid #7a0f0f;
  box-sizing: content-box;
}

.tools {
  display: flex;
  align-items: center;
  height: 15px;
  padding: 1px 0 0 10px;
  box-sizing: border-box;
  background: #141823;
  color: #b4b4b4;
  white-space: nowrap;
  font-size: 10px;
}

.tool {
  margin-right: 7px;
  line-height: 14px;
}

.tool.hot {
  margin-right: 0;
  margin-left: -2px;
  width: 55px;
  text-align: center;
  background: #e08a18;
  color: #3a2406;
}

.pill {
  display: flex;
  width: 138px;
  height: 14px;
  margin-left: 278px;
  border-radius: 8px;
  overflow: hidden;
  background: #45474c;
  line-height: 14px;
}

.pill span {
  width: 26px;
  text-align: center;
}

.pill .lit {
  background: #e08a18;
  color: #3a2406;
}

.pill .wide {
  width: 34px;
}

.pill.mini {
  width: 33px;
  margin-left: 4px;
}

.pill.mini span {
  width: 16px;
  font-size: 9px;
  color: #ddd;
}

.tool.push {
  margin-left: auto;
  margin-right: 6px;
}

.tool.box {
  line-height: 14px;
  background: #33363c;
  text-align: center;
}

.tool.index {
  width: 53px;
  margin-right: 3px;
}

.tool.self {
  width: 41px;
}

.tool.end {
  margin-right: 2px;
  font-weight: 700;
  color: #ddd;
}

.subbar {
  height: 15px;
  background: #11141c;
  border-bottom: 1px solid #7a0f0f;
  box-sizing: border-box;
  padding: 3px 0 0 29px;
}

.drop {
  display: block;
  width: 10px;
  height: 11px;
  border: 1px solid #c07a18;
  box-sizing: border-box;
  background: linear-gradient(#d08a18, #d08a18) center / 4px 2px no-repeat;
}

.plot {
  display: block;
  flex: none;
}

.axis {
  font-size: 11px;
}

.axis.dark {
  fill: #7a1212;
}

.note {
  font-size: 10.5px;
  fill: #8290a8;
}

.level {
  font-size: 10.5px;
  fill: #c8c83c;
}

.vol-bar {
  display: flex;
  align-items: center;
  gap: 3px;
  height: 15px;
  padding-left: 31px;
  background: #14171f;
  border-top: 1px solid #7a0f0f;
  border-bottom: 1px solid #7a0f0f;
  box-sizing: border-box;
  font-size: 10px;
  color: #a8aeb8;
}

.vol-down {
  color: #19e4e8;
  font-weight: 700;
}

.vol-close {
  margin-left: auto;
  margin-right: 5px;
}

.date-row {
  display: flex;
  align-items: center;
  height: 12px;
  padding-left: 6px;
  color: #d8d8d8;
  font-size: 10.5px;
  white-space: nowrap;
}

.date-arrow {
  width: 11px;
  font-family: "DejaVu Sans", sans-serif;
  font-size: 10px;
}

.date-year {
  margin-left: 39px;
  width: 14px;
}

.date-chip {
  width: 83px;
  height: 12px;
  line-height: 12px;
  padding-left: 10px;
  box-sizing: border-box;
  background: #2a3a5e;
  color: #c8c83c;
}

.date-month {
  margin-left: 704px;
}

/* quote panel */
.quote {
  width: 172px;
  flex: none;
  overflow: hidden;
}

.quote-in {
  width: 197.7px;
  height: 537px;
  transform: scaleX(0.87);
  transform-origin: 0 0;
  font-size: 12px;
  line-height: 14.3px;
  white-space: nowrap;
}

.lab {
  color: #b4b4b4;
  font-size: 13px;
}

.red {
  color: #d84848;
}

.yel {
  color: #c8c83c;
}

.cyan {
  color: #19c8d4;
}

.green {
  color: #18c850;
}

.right {
  text-align: right;
}

.q-title {
  display: flex;
  align-items: center;
  height: 22px;
  padding: 1px 0 0 4px;
  border-bottom: 1px solid #7a0f0f;
  box-sizing: border-box;
  background: #0c0c0c;
}

.nav {
  width: 24px;
  font-size: 20px;
  color: #999;
}

.nav.next {
  margin-left: auto;
  width: 8px;
}

.q-name {
  font-size: 18.2px;
  color: #c4c43a;
}

.q-code {
  margin-left: 8px;
  font-size: 16.5px;
  color: #19c8d4;
}

.q-wei {
  display: grid;
  grid-template-columns: 47px 50px 96px;
  height: 14px;
  padding-left: 4px;
  border-bottom: 1px solid #7a0f0f;
  box-sizing: border-box;
}

.book {
  display: flex;
  height: 71px;
  border-bottom: 1px solid #7a0f0f;
  box-sizing: border-box;
}

.book-side {
  width: 15px;
  display: flex;
  flex-direction: column;
  justify-content: space-around;
  align-items: center;
  border-right: 1px solid #7a0f0f;
  font-size: 13px;
  color: #b4b4b4;
}

.book-rows {
  padding-top: 1px;
}

.book-row {
  display: grid;
  grid-template-columns: 34px 40px 42px;
  height: 14.2px;
  line-height: 14.2px;
  padding-left: 4px;
}

.stats {
  height: 100px;
  padding-top: 1px;
  border-bottom: 1px solid #7a0f0f;
  box-sizing: border-box;
}

.stat {
  display: grid;
  grid-template-columns: 32px 59px 38px 59px;
  height: 14.2px;
  line-height: 14.2px;
  padding-left: 4.6px;
}

.stat.ruled {
  height: 14.6px;
  padding-top: 1px;
  border-bottom: 1px solid #7a0f0f;
  box-sizing: border-box;
}

.second {
  padding-left: 8px;
}

.deal-head {
  display: flex;
  height: 15px;
  line-height: 15px;
  background: #2a2a2c;
  color: #c8c8c8;
  text-align: center;
  font-size: 13px;
}

.deal-name {
  width: 130px;
  border-right: 1px solid #000;
}

.deal-btn {
  width: 16px;
  border-right: 1px solid #000;
}

.deal-btn.play {
  font-size: 10px;
}

.deal-btn.out {
  width: 32px;
  border: none;
}

.deal-cols {
  display: flex;
  height: 14px;
  line-height: 14px;
  background: #1c1c1e;
  border-top: 1px solid #3a1010;
  border-bottom: 1px solid #7a0f0f;
  box-sizing: border-box;
  color: #c0c0c0;
  font-size: 13px;
  text-align: center;
}

.deal-cols span {
  border-right: 1px solid #7a0f0f;
}

.deal-cols .c1 {
  width: 31px;
}

.deal-cols .c2 {
  width: 61px;
}

.deal-cols .c3 {
  width: 50px;
}

.deal-cols .c4 {
  flex: 1;
  border: none;
}

.ticks {
  display: flex;
  height: 187px;
}

.tick-list {
  width: 186px;
}

.tick {
  display: grid;
  grid-template-columns: 31px 64px 46px 10px 34px;
  height: 14.3px;
  line-height: 14.3px;
  box-sizing: border-box;
  color: #c8c8c8;
}

.tick.cut {
  border-bottom: 1px dotted #7a0f0f;
}

.t-time {
  text-align: right;
  color: #c4ccd8;
}

.t-price {
  padding-left: 22px;
  color: #d84848;
}

.t-price i,
.t-mark {
  font-style: normal;
  font-size: 9.5px;
  font-family: "DejaVu Sans", sans-serif;
  line-height: 14.3px;
}

.u {
  color: #e85050;
}

.d {
  color: #18d860;
}

.t-mark {
  padding-left: 2px;
}

.t-vol {
  text-align: right;
  color: #c8c83c;
}

.t-count {
  text-align: right;
  color: #8f98aa;
}

.tick-scroll {
  flex: 1;
  background: #1a1a1a;
}

/* right rail */
.rail {
  flex: 1;
  display: flex;
  flex-direction: column;
  align-items: center;
  gap: 1px;
  margin-top: -3px;
  background: #222;
  border-left: 1px solid #7a0f0f;
}

.rail-tab {
  width: 19px;
  height: 64px;
  flex: none;
  display: flex;
  align-items: center;
  justify-content: center;
  writing-mode: vertical-rl;
  text-orientation: upright;
  font-size: 11px;
  line-height: 19px;
  color: #fff;
  background: #2a7ccc;
  border-radius: 2px;
}

.rail-tab:nth-child(1) {
  height: 63px;
}

.rail-tab:nth-child(2) {
  height: 53px;
}

.rail-tools {
  display: flex;
  flex-direction: column;
  gap: 2px;
  margin-top: 168px;
}

.rail-btn {
  width: 16px;
  height: 16px;
  display: flex;
  align-items: center;
  justify-content: center;
  background: #333;
  color: #aaa;
  font-size: 12px;
}

.rail-btn.buy {
  color: #a8b0f0;
}

.rail-btn.tall {
  height: 28px;
  margin-top: 3px;
  writing-mode: vertical-rl;
  text-orientation: upright;
  font-size: 11px;
}

/* viewer toolbar */
.bar {
  display: flex;
  align-items: center;
  gap: 25px;
  height: 74px;
  padding: 3px 0 0 306px;
  flex: none;
  box-sizing: border-box;
}

.ic {
  width: 28px;
  height: 27px;
  flex: none;
  fill: none;
  stroke: #555;
  stroke-width: 2.2;
  stroke-linecap: round;
  stroke-linejoin: round;
}

.sep {
  width: 1px;
  height: 25px;
  background: #ccc;
}

.gap-s {
  margin-left: 5px;
}

.gap-m {
  margin-left: 12px;
}

.gap-x {
  margin-left: 2px;
}

.pct {
  width: 41px;
  margin-left: 10px;
  font-size: 21px;
  font-weight: 400;
  color: #555;
  white-space: nowrap;
}

.one {
  width: 28px;
  height: 27px;
  display: flex;
  align-items: center;
  justify-content: center;
  border: 2px solid #555;
  border-radius: 2px;
  box-sizing: border-box;
  font-size: 13px;
  font-weight: 700;
  color: #555;
}

.rot {
  width: 30px;
}

/* hand drawn marks */
.marks {
  position: absolute;
  left: 0;
  top: 0;
  pointer-events: none;
}
</style>
